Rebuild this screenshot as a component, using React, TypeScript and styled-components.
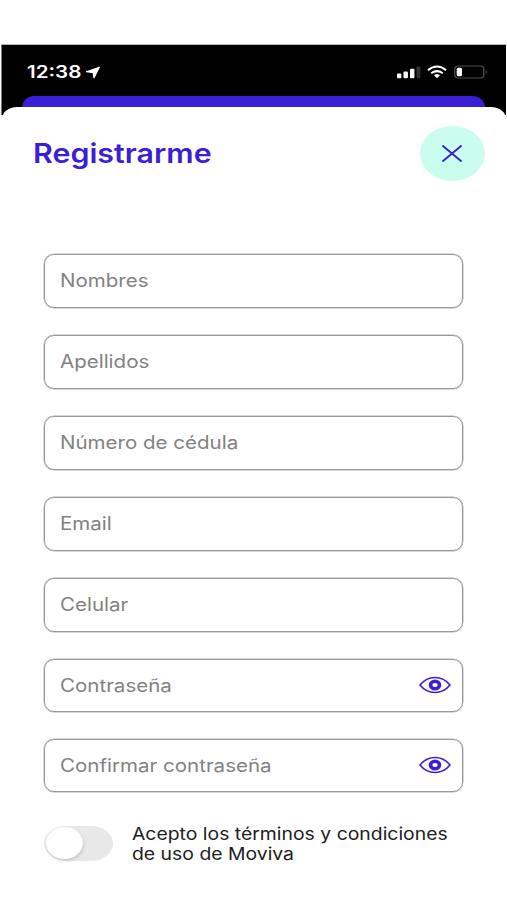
import React, { useState } from "react";
import styled, { createGlobalStyle } from "styled-components";

const ink = "#3a1fd6";

const GlobalStyle = createGlobalStyle`
  * { box-sizing: border-box; }
  body { margin: 0; background: #fff; font-family: Inter, "Liberation Sans", sans-serif; }
`;

const Screen = styled.main`
  width: 507px;
  height: 900px;
  padding-top: 45px;
  background: #fff;
  overflow: hidden;
`;

const Backdrop = styled.div`
  height: 70px;
  margin: 0 1px 0 1px;
  padding: 0 21px;
  background: #000;
  border-left: 1px solid #777;
  box-shadow: 0 -0.5px 0 #777;
`;

const StatusBar = styled.div`
  display: flex;
  align-items: center;
  justify-content: space-between;
  height: 51px;
  padding: 3px 0 0 4px;
  margin-right: -3px;
  color: #fff;
`;

const StatusGroup = styled.div`
  display: flex;
  align-items: center;
`;

const Wide = styled.span<{ $x?: number }>`
  display: inline-block;
  white-space: nowrap;
  transform: scaleX(${(p) => p.$x ?? 1.14});
  transform-origin: left center;
`;

const Clock = styled.div`
  width: 59px;
  font-size: 17px;
  font-weight: 600;
  line-height: 20px;
`;

const PreviousCard = styled.div`
  height: 19px;
  border-radius: 12px 12px 0 0;
  background: ${ink};
  margin-left: -1px;
`;

const Sheet = styled.section`
  height: 793px;
  margin: -8px 1px 0 2px;
  border-radius: 15px 15px 0 0 / 12px 12px 0 0;
  background: #fff;
  position: relative;
`;

const Header = styled.header`
  display: flex;
  align-items: center;
  justify-content: space-between;
  height: 91px;
  padding: 0 21px 0 31px;
`;

const Title = styled.h1`
  margin: 3px 0 0;
  font-size: 27px;
  line-height: 34px;
  font-weight: 600;
  color: ${ink};
`;

const CloseButton = styled.button`
  display: grid;
  place-items: center;
  width: 65px;
  height: 55px;
  padding: 0 1px 0 0;
  margin-top: 1px;
  border: 0;
  border-radius: 50%;
  background: #cbfdee;
`;

const Form = styled.form`
  display: flex;
  flex-direction: column;
  gap: 27px;
  padding: 56px 43px 0 42px;
`;

const Field = styled.label<{ $short?: boolean }>`
  display: flex;
  align-items: center;
  justify-content: space-between;
  height: ${(p) => (p.$short ? 53 : 54)}px;
  padding: 0 11px 0 15px;
  border: 1px solid #989898;
  border-radius: 10px;
  box-shadow: 0 0 0 0.5px #b4b4b4;
  font-size: 18px;
  line-height: 24px;
  color: #828282;

  svg { margin-bottom: 1px; }
`;

const Terms = styled.div`
  display: flex;
  align-items: flex-start;
  padding: 34px 0 0 42px;
`;

const Toggle = styled.button<{ $on: boolean }>`
  display: flex;
  justify-content: ${(p) => (p.$on ? "flex-end" : "flex-start")};
  width: 69px;
  height: 35px;
  padding: 1px 2px 2px;
  border: 0;
  border-radius: 23px / 18px;
  background: ${(p) => (p.$on ? ink : "#e8e8e8")};
`;

const Knob = styled.span`
  width: 37px;
  height: 32px;
  border-radius: 50%;
  background: #fff;
  box-shadow: 1px 2px 3px rgba(0, 0, 0, 0.13);
`;

const TermsText = styled.p`
  display: flex;
  flex-direction: column;
  align-items: flex-start;
  margin: -2px 0 0 19px;
  font-size: 17px;
  line-height: 20px;
  color: #202020;
`;

const LocationArrow = () => (
  <svg width="14" height="13" viewBox="0 0 14 13">
    <path d="M13.3 1.2 8 11.8 7.2 6.6.5 5.7Z" fill="#fff" stroke="#fff" strokeWidth="1.2" strokeLinejoin="round" />
  </svg>
);

const StatusIcons = () => (
  <svg width="92" height="16" viewBox="0 0 92 16">
    <g fill="#fff">
      <rect x="1" y="9.5" width="4.4" height="4.7" rx="1" />
      <rect x="7.5" y="7.5" width="4.4" height="6.7" rx="1" />
      <rect x="14" y="4.8" width="4.4" height="9.4" rx="1" />
      <rect x="20.5" y="2.5" width="3.8" height="11.7" rx="1" fill="#333" />
      <path d="M38.3 11.2q2.7-1.7 5.4 0L41 14.1Z" stroke="#fff" strokeWidth=".5" />
    </g>
    <g fill="none" stroke="#fff" strokeWidth="2">
      <path d="M32 6.1Q41-1.1 50 6.1" />
      <path d="M35.2 9.3q5.8-4.4 11.6 0" />
    </g>
    <rect x="58.8" y="2" width="29" height="12" rx="3.5" fill="none" stroke="#515151" strokeWidth="1.2" />
    <rect x="60.7" y="3.8" width="5.3" height="8.5" rx="1.5" fill="#fff" />
    <path d="M89.5 6q2 2 0 4Z" fill="#515151" />
  </svg>
);

const CloseIcon = () => (
  <svg width="20" height="17" viewBox="0 0 20 17">
    <path d="M1 1 19 16M19 1 1 16" stroke={ink} strokeWidth="1.9" strokeLinecap="round" />
  </svg>
);

const EyeIcon = () => (
  <svg width="32" height="18" viewBox="0 0 32 18">
    <path d="M1 9C9-1 23-1 31 9 23 19 9 19 1 9Z" fill="none" stroke={ink} strokeWidth="1.6" strokeLinejoin="round" />
    <ellipse cx="16" cy="9" rx="4.5" ry="3.8" fill="#fff" stroke={ink} strokeWidth="3.6" />
  </svg>
);

const fields = [
  { label: "Nombres" },
  { label: "Apellidos" },
  { label: "Número de cédula" },
  { label: "Email" },
  { label: "Celular" },
  { label: "Contraseña", secret: true },
  { label: "Confirmar contraseña", secret: true },
];

export default function App() {
  const [accepted, setAccepted] = useState(false);
  return (
    <Screen>
      <GlobalStyle />
      <Backdrop>
        <StatusBar>
          <StatusGroup>
            <Clock><Wide $x={1.21}>12:38</Wide></Clock>
            <LocationArrow />
          </StatusGroup>
          <StatusIcons />
        </StatusBar>
        <PreviousCard />
      </Backdrop>
      <Sheet>
        <Header>
          <Title><Wide $x={1.125}>Registrarme</Wide></Title>
          <CloseButton type="button" aria-label="Cerrar"><CloseIcon /></CloseButton>
        </Header>
        <Form>
          {fields.map((f) => (
            <Field key={f.label} $short={f.secret}>
              <Wide>{f.label}</Wide>
              {f.secret && <EyeIcon />}
            </Field>
          ))}
        </Form>
        <Terms>
          <Toggle type="button" role="switch" aria-checked={accepted} $on={accepted} onClick={() => setAccepted(!accepted)}>
            <Knob />
          </Toggle>
          <TermsText>
            <Wide>Acepto los términos y condiciones</Wide>
            <Wide>de uso de Moviva</Wide>
          </TermsText>
        </Terms>
      </Sheet>
    </Screen>
  );
}
